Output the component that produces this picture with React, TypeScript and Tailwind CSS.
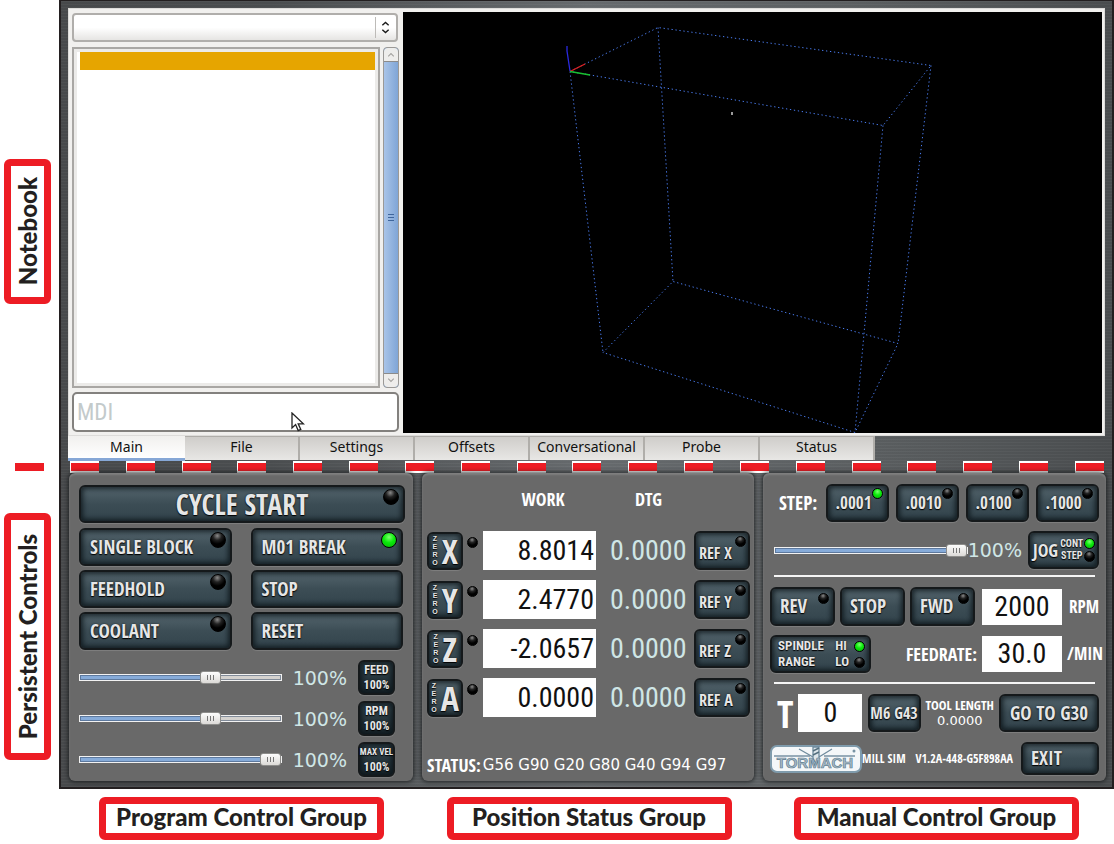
import { useState } from "react"
import type { CSSProperties, ReactNode } from "react"
import clsx from "clsx"

const metal =
    "border-x-2 border-[#231f20] bg-[repeating-linear-gradient(0deg,rgba(255,255,255,0.02)_0px,rgba(255,255,255,0.02)_1px,rgba(0,0,0,0.04)_1px,rgba(0,0,0,0.04)_3px),linear-gradient(90deg,#4a4c4e_0%,#4d5052_20%,#6a6e71_50%,#5f6365_75%,#4c4f51_100%)]"

const condensed = "font-['Open_Sans_Condensed','Roboto_Condensed',sans-serif]"
const digits = "font-['Roboto_Condensed','Liberation_Sans',sans-serif]"
const embossed = "text-[#e6e6e6] [text-shadow:0_1px_1px_#000,0_0_2px_rgba(0,0,0,0.6)]"

const axes = [
    { name: "X", work: "8.8014", dtg: "0.0000" },
    { name: "Y", work: "2.4770", dtg: "0.0000" },
    { name: "Z", work: "-2.0657", dtg: "0.0000" },
    { name: "A", work: "0.0000", dtg: "0.0000" },
]

const tabs = ["Main", "File", "Settings", "Offsets", "Conversational", "Probe", "Status"]

const steps = [".0001", ".0010", ".0100", ".1000"]

function Led({ on = false, small = false, className }: { on?: boolean; small?: boolean; className?: string }) {
    return (
        <span
            className={clsx(
                "block shrink-0 rounded-full border border-black",
                small ? "size-[11px]" : "size-4",
                on
                    ? "bg-[radial-gradient(circle_at_50%_30%,#7dff6e_0%,#0bea0b_45%,#05b505_100%)]"
                    : "bg-[radial-gradient(circle_at_45%_20%,#8a8a8a_0%,#222_32%,#000_60%)]",
                className
            )}
        />
    )
}

function PanelButton({
    children,
    className,
    label,
    dark = false,
}: {
    children?: ReactNode
    className?: string
    label?: string
    dark?: boolean
}) {
    return (
        <button
            type="button"
            aria-label={label}
            className={clsx(
                "relative flex shrink-0 items-center rounded-md border-2 border-[#15191b] bg-linear-to-b font-bold whitespace-nowrap shadow-[inset_0_0_5px_2px_rgba(8,16,20,0.75),0_1px_1px_rgba(255,255,255,0.15)]",
                dark ? "from-[#33444c] to-[#1c292f]" : "from-[#54656d] via-[#3c4d55] to-[#33444c]",
                condensed,
                embossed,
                className
            )}
        >
            {children}
        </button>
    )
}

function Slider({ label, max, className }: { label: string; max: number; className?: string }) {
    const [value, setValue] = useState(100)
    const fill = { "--fill": `${(value / max) * 100}%` } as CSSProperties

    return (
        <input
            type="range"
            aria-label={label}
            min={0}
            max={max}
            value={value}
            onChange={(e) => setValue(Number(e.target.value))}
            style={fill}
            className={clsx(
                "h-[13px] min-w-0 appearance-none bg-transparent",
                "[&::-webkit-slider-runnable-track]:h-[7px] [&::-webkit-slider-runnable-track]:border [&::-webkit-slider-runnable-track]:border-[#f2f2f2] [&::-webkit-slider-runnable-track]:bg-[linear-gradient(90deg,#86abd9_var(--fill),#d4d2cf_var(--fill))] [&::-webkit-slider-runnable-track]:shadow-[inset_0_0_0_1px_rgba(60,80,110,0.55)]",
                "[&::-webkit-slider-thumb]:mt-[-4px] [&::-webkit-slider-thumb]:h-[13px] [&::-webkit-slider-thumb]:w-[21px] [&::-webkit-slider-thumb]:appearance-none [&::-webkit-slider-thumb]:rounded-[3px] [&::-webkit-slider-thumb]:border [&::-webkit-slider-thumb]:border-[#8d8d8b]",
                "[&::-webkit-slider-thumb]:bg-[linear-gradient(90deg,#777_1px,transparent_1px,transparent_3px,#777_3px,#777_4px,transparent_4px,transparent_6px,#777_6px,#777_7px),linear-gradient(#fdfdfd,#dcdad7)] [&::-webkit-slider-thumb]:bg-[length:7px_5px,100%_100%] [&::-webkit-slider-thumb]:bg-center [&::-webkit-slider-thumb]:bg-no-repeat",
                className
            )}
        />
    )
}

function Percent() {
    return <span className="font-['DejaVu_Sans',sans-serif] text-[19px] leading-6 text-[#cfe6e6]">100%</span>
}

function Panel({ children, className }: { children: ReactNode; className?: string }) {
    return (
        <section
            className={clsx(
                "flex min-w-0 flex-col rounded-md bg-[#696969] shadow-[0_0_4px_1px_rgba(20,22,24,0.8),inset_0_2px_2px_rgba(255,255,255,0.15)]",
                className
            )}
        >
            {children}
        </section>
    )
}

function SideLabel({ children, className }: { children: ReactNode; className?: string }) {
    return (
        <div
            className={clsx(
                "ml-1 flex w-[47px] items-center justify-center rounded-md border-7 border-[#ed1c24] bg-white",
                className
            )}
        >
            <span className="rotate-180 font-['Lato',sans-serif] text-2xl leading-6 font-black whitespace-nowrap text-[#231f20] [writing-mode:vertical-rl]">
                {children}
            </span>
        </div>
    )
}

function BottomLabel({ children }: { children: ReactNode }) {
    return (
        <div className="flex h-[43px] w-[285px] items-center justify-center rounded-md border-7 border-[#ed1c24] bg-white pb-1 font-['Lato',sans-serif] text-2xl leading-7 font-black whitespace-nowrap text-[#231f20]">
            {children}
        </div>
    )
}

function ProgramList() {
    return (
        <div className="flex w-[334px] shrink-0 flex-col pt-px pr-1 pb-px pl-[3px]">
            <div className="relative w-[326px]">
                <select
                    aria-label="Loaded program"
                    className="block h-[29px] w-full appearance-none rounded-sm border-2 border-[#b0aeab] bg-linear-to-b from-white from-50% to-[#e6e5e3]"
                >
                    <option value=""></option>
                </select>
                <span className="pointer-events-none absolute top-1 right-[22px] h-[21px] w-px bg-[#bdbbb8]" />
                <svg className="pointer-events-none absolute top-2 right-[8px] h-[13px] w-[9px]" viewBox="0 0 10 14" fill="none" stroke="#1a1a1a" strokeWidth="1.600">
                    <path d="M1.500 4.500 5 1.500 8.500 4.500M1.500 9.500 5 12.500 8.500 9.500" />
                </svg>
            </div>
            <div className="mt-[5px] flex min-h-0 flex-1 gap-[3px]">
                <div className="flex-1 border-2 border-[#a9a7a4] bg-[#ecebe9] p-[3px]">
                    <div className="h-full bg-white pl-[3px]">
                        <div className="h-[18px] bg-[#e6a500]" />
                    </div>
                </div>
                <div className="flex w-4 flex-col rounded-sm border border-[#9b9996] bg-[#86abd9]">
                    <svg className="h-[14px] w-full rounded-t-sm border-b border-[#8b8b8b] bg-[#eeedeb]" viewBox="0 0 14 14" fill="none" stroke="#a5a3a0" strokeWidth="1.200">
                        <path d="M4 9l3-3 3 3" />
                    </svg>
                    <div className="flex flex-1 flex-col items-center justify-center gap-[2px] bg-linear-to-r from-[#a9c4e8] to-[#7fa5d6]">
                        <span className="h-px w-[6px] bg-[#3f669c]" />
                        <span className="h-px w-[6px] bg-[#3f669c]" />
                        <span className="h-px w-[6px] bg-[#3f669c]" />
                    </div>
                    <svg className="h-[14px] w-full rounded-b-sm border-t border-[#8b8b8b] bg-[#eeedeb]" viewBox="0 0 14 14" fill="none" stroke="#a5a3a0" strokeWidth="1.200">
                        <path d="M4 5l3 3 3-3" />
                    </svg>
                </div>
            </div>
            <div className="relative mt-1">
                <input
                    type="text"
                    aria-label="MDI"
                    placeholder="MDI"
                    className={clsx(
                        "block h-10 w-full rounded-[5px] border-2 border-[#83817e] bg-white px-[3px] text-[23px] placeholder:text-[#c3cacb]",
                        digits
                    )}
                />
                <svg className="absolute top-5 left-[219px] h-[20px] w-[14px]" viewBox="0 0 14 20" fill="#fff" stroke="#222" strokeWidth="1.300">
                    <path d="M1 1v15l3.600-3.400L7.200 18.600l2.600-1.200-2.600-5.600h5.200z" />
                </svg>
            </div>
        </div>
    )
}

function ToolPath() {
    return (
        <div className="h-[421px] min-w-0 flex-1 bg-black">
            <svg className="h-full w-full" viewBox="0 0 699 421" fill="none">
                <g stroke="#4a7cf0" strokeWidth="1" strokeDasharray="1.300 2.700">
                    <path d="M167 59.500 255 15.500 528 53.500 480 113.500z" />
                    <path d="M200 340.500 270 269.500 495 331.500 452 420.500z" />
                    <path d="M167 59.500 200 340.500M255 15.500 270 269.500M528 53.500 495 331.500M480 113.500 452 420.500" />
                </g>
                <path d="M164 34v5l3 20" stroke="#2a2ae0" strokeWidth="1.300" />
                <path d="M167 59.500l15-7.500" stroke="#e02020" strokeWidth="1.300" />
                <path d="M167 59.500l20 3.500" stroke="#18c030" strokeWidth="1.500" />
                <path d="M329 100v3" stroke="#999" strokeWidth="2" />
            </svg>
        </div>
    )
}

function Tabs() {
    const [active, setActive] = useState("Main")

    return (
        <div role="tablist" className="flex h-[25px] items-start">
            {tabs.map((tab, i) => (
                <button
                    key={tab}
                    type="button"
                    role="tab"
                    aria-selected={tab === active}
                    onClick={() => setActive(tab)}
                    className={clsx(
                        "font-['Noto_Sans',sans-serif] text-sm leading-5 text-[#111]",
                        i === 0 ? "w-[117px]" : "w-[115px]",
                        tab === active
                            ? "h-[25px] border-b-3 border-[#86a7d6] bg-linear-to-b from-[#f1f0ee] to-white"
                            : "h-6 border-t border-r-2 border-[#b0aeaa] bg-linear-to-b from-[#cfcdca] to-[#e8e7e5] pb-[3px]"
                    )}
                >
                    {tab}
                </button>
            ))}
        </div>
    )
}

function Dash() {
    return (
        <span className="block w-[29px] bg-white py-[2px] pl-px">
            <span className="block h-2 bg-[#ed1c24]" />
        </span>
    )
}

function ProgramControl() {
    const overrides = [
        { label: "FEED", max: 150 },
        { label: "RPM", max: 150 },
        { label: "MAX VEL", max: 100 },
    ]

    return (
        <Panel className="pt-3 pr-2 pb-1 pl-[10px]">
            <PanelButton className="h-[38px] w-full justify-center text-[28px]">
                CYCLE START
                <Led className="absolute top-[2px] right-1" />
            </PanelButton>
            <div className="mt-[5px] grid grid-cols-2 gap-x-[19px] gap-y-1 pr-[2px] text-[19px]">
                <PanelButton className="h-[38px] pl-[9px]">
                    SINGLE BLOCK
                    <Led className="absolute top-[2px] right-1" />
                </PanelButton>
                <PanelButton className="h-[38px] pl-[9px]">
                    M01 BREAK
                    <Led on className="absolute top-[2px] right-1" />
                </PanelButton>
                <PanelButton className="h-[38px] pl-[9px]">
                    FEEDHOLD
                    <Led className="absolute top-[2px] right-1" />
                </PanelButton>
                <PanelButton className="h-[38px] pl-[9px]">STOP</PanelButton>
                <PanelButton className="h-[38px] pl-[9px]">
                    COOLANT
                    <Led className="absolute top-[2px] right-1" />
                </PanelButton>
                <PanelButton className="h-[38px] pl-[9px]">RESET</PanelButton>
            </div>
            <div className="mt-[10px] flex flex-col gap-[6px]">
                {overrides.map(({ label, max }) => (
                    <div key={label} className="flex items-center gap-[11px]">
                        <Slider label={label} max={max} className="flex-1" />
                        <Percent />
                        <PanelButton
                            dark
                            label={`${label} 100%`}
                            className="mr-[10px] h-[35px] w-[37px] flex-col justify-center"
                        >
                            <span className={clsx("leading-[15px]", digits, label === "MAX VEL" ? "text-[9px]" : "text-xs")}>{label}</span>
                            <span className={clsx("text-xs leading-[15px]", digits)}>100%</span>
                        </PanelButton>
                    </div>
                ))}
            </div>
        </Panel>
    )
}

function PositionStatus() {
    return (
        <Panel className="pr-1 pb-1 pl-[5px]">
            <div className={clsx("flex pt-3 text-lg leading-7 font-bold text-white", condensed)}>
                <span className="ml-[60px] w-[112px] text-center">WORK</span>
                <span className="ml-[13px] w-[73px] text-center">DTG</span>
            </div>
            <div className="mt-[18px] flex flex-col gap-[10px]">
                {axes.map((axis) => (
                    <div key={axis.name} className="flex items-center">
                        <PanelButton label={`Zero ${axis.name}`} className="h-[38px] w-9 justify-center gap-1">
                            <span className="flex flex-col items-center font-['Liberation_Sans',sans-serif] text-[7px] leading-[8px]">
                                <span>Z</span>
                                <span>E</span>
                                <span>R</span>
                                <span>O</span>
                            </span>
                            <span className="text-[34px] leading-8">{axis.name}</span>
                        </PanelButton>
                        <Led small className="mr-[5px] mb-4 ml-1" />
                        <input
                            type="text"
                            aria-label={`${axis.name} work`}
                            defaultValue={axis.work}
                            className={clsx("h-[39px] w-[113px] min-w-0 bg-white px-[2px] text-right text-[28px] text-[#111]", digits)}
                        />
                        <span className={clsx("ml-[14px] w-[74px] text-[28px] leading-8 text-[#cfe6e6]", digits)}>{axis.dtg}</span>
                        <PanelButton className="ml-auto h-[39px] w-[56px] pt-1 pl-[3px] text-base">
                            REF {axis.name}
                            <Led small className="absolute top-[3px] right-[2px]" />
                        </PanelButton>
                    </div>
                ))}
            </div>
            <div className="mt-auto flex items-center gap-[2px] whitespace-nowrap text-white">
                <span className={clsx("text-lg leading-6 font-bold", condensed)}>STATUS:</span>
                <span className="font-['DejaVu_Sans',sans-serif] text-[15px] leading-5">G56 G90 G20 G80 G40 G94 G97</span>
            </div>
        </Panel>
    )
}

function Logo() {
    return (
        <svg className="h-[28px] w-[92px] shrink-0" viewBox="0 0 92 28" role="img" aria-label="Tormach">
            <rect x="1" y="1" width="90" height="26" rx="6" fill="#f4f7f9" stroke="#7f9bac" strokeWidth="2" />
            <path d="M4 11h36M54 11h31" stroke="#7893a4" strokeWidth="1.500" />
            <path d="M29 4l14 8M62 4l-13 8M43 2v11l3 6 3-6V2z" stroke="#6f8b9d" strokeWidth="1.300" fill="#dfe7ec" />
            <path d="M43 6l6-3M43 10l6-3" stroke="#55707f" strokeWidth="1.500" />
            <circle cx="84" cy="6" r="1.500" fill="#7893a4" />
            <text x="45" y="23" textAnchor="middle" fill="#a9bcc8" stroke="#5f7d90" strokeWidth="0.700" className="font-['Liberation_Sans',sans-serif] text-[15px] font-bold">
                TORMACH
            </text>
        </svg>
    )
}

function ManualControl() {
    const field = clsx("h-9 w-[80px] min-w-0 bg-white text-center text-[28px] text-[#111]", digits)
    const caption = clsx("font-bold whitespace-nowrap text-white", condensed)

    return (
        <Panel className="pt-[11px] pr-[7px] pb-[6px] pl-[7px]">
            <div className="flex items-center gap-[7px]">
                <span className={clsx("mr-auto ml-[9px] text-[19px]", caption)}>STEP:</span>
                {steps.map((step, i) => (
                    <PanelButton key={step} className="h-[38px] w-[63px] justify-center pr-2 text-[17px]">
                        {step}
                        <Led small on={i === 0} className="absolute top-[2px] right-1" />
                    </PanelButton>
                ))}
            </div>
            <div className="mt-[9px] flex items-center">
                <Slider label="Jog speed" max={100} className="ml-1 flex-1" />
                <Percent />
                <PanelButton label="Jog mode" className="ml-[6px] h-[38px] w-[71px] gap-[2px] pl-[3px]">
                    <span className="text-lg">JOG</span>
                    <span className={clsx("flex flex-col text-[10px] leading-3", digits)}>
                        <span>CONT</span>
                        <span>STEP</span>
                    </span>
                    <span className="absolute top-[5px] right-[2px] flex flex-col gap-[2px]">
                        <Led small on />
                        <Led small />
                    </span>
                </PanelButton>
            </div>
            <hr className="mx-1 mt-[6px] border-t-2 border-[#f5f5f5]" />
            <div className="mt-[10px] flex items-center gap-[5px]">
                <PanelButton className="h-[39px] w-[65px] pl-2 text-[19px]">
                    REV
                    <Led small className="absolute top-1 right-1" />
                </PanelButton>
                <PanelButton className="h-[39px] w-[65px] pl-2 text-[19px]">STOP</PanelButton>
                <PanelButton className="h-[39px] w-[65px] pl-2 text-[19px]">
                    FWD
                    <Led small className="absolute top-1 right-1" />
                </PanelButton>
                <input id="rpm" type="text" defaultValue="2000" className={clsx("ml-auto", field)} />
                <label htmlFor="rpm" className={clsx("w-[32px] text-right text-[17px]", caption)}>
                    RPM
                </label>
            </div>
            <div className="mt-[9px] flex items-center gap-[5px]">
                <PanelButton label="Spindle range" className="h-[38px] w-[101px] justify-between pr-5 pl-[6px]">
                    <span className={clsx("flex flex-col text-left text-[13px] leading-4", digits)}>
                        <span>SPINDLE</span>
                        <span>RANGE</span>
                    </span>
                    <span className={clsx("flex flex-col text-left text-[13px] leading-4", digits)}>
                        <span>HI</span>
                        <span>LO</span>
                    </span>
                    <span className="absolute top-1 right-1 flex flex-col gap-[5px]">
                        <Led small on />
                        <Led small />
                    </span>
                </PanelButton>
                <label htmlFor="feedrate" className={clsx("ml-auto text-lg", caption)}>
                    FEEDRATE:
                </label>
                <input id="feedrate" type="text" defaultValue="30.0" className={field} />
                <span className={clsx("w-[32px] text-right text-[17px]", caption)}>/MIN</span>
            </div>
            <hr className="mx-1 mt-[9px] border-t-2 border-[#f5f5f5]" />
            <div className="mt-[10px] flex items-center justify-between">
                <label htmlFor="tool" className={clsx("ml-[7px] text-[38px] leading-[38px]", caption)}>
                    T
                </label>
                <input
                    id="tool"
                    type="text"
                    defaultValue="0"
                    className={clsx("h-[38px] w-16 min-w-0 bg-white text-center text-[28px] text-[#111]", digits)}
                />
                <PanelButton className="h-[38px] w-[53px] justify-center text-base">M6 G43</PanelButton>
                <div className="flex flex-col items-center text-white">
                    <span className={clsx("text-[13px] leading-4", caption)}>TOOL LENGTH</span>
                    <span className="font-['DejaVu_Sans',sans-serif] text-[13px] leading-4">0.0000</span>
                </div>
                <PanelButton className="h-[38px] w-[100px] justify-center text-[19px]">GO TO G30</PanelButton>
            </div>
            <div className="mt-[10px] flex items-center">
                <Logo />
                <span className={clsx("text-xs", caption)}>MILL SIM</span>
                <span className={clsx("ml-auto text-xs", caption)}>V1.2A-448-G5F898AA</span>
                <PanelButton className="ml-2 h-[33px] w-[78px] pl-2 text-[19px]">EXIT</PanelButton>
            </div>
        </Panel>
    )
}

export default function App() {
    return (
        <main className="bg-white">
            <div className="grid grid-cols-[59px_1fr]">
                <div className="pt-[159px]">
                    <SideLabel className="h-[145px]">Notebook</SideLabel>
                </div>
                <div className={clsx("border-t px-[7px] pt-[7px]", metal)}>
                    <div className="flex border border-[#dddcda] bg-[#f1f0ee] pt-[3px] pr-[2px] pb-[2px]">
                        <ProgramList />
                        <ToolPath />
                    </div>
                    <Tabs />
                </div>

                <div className="flex items-center pl-[15px]">
                    <span className="block h-2 w-[29px] bg-[#ed1c24]" />
                </div>
                <div className={clsx("flex justify-between pr-2 pl-[9px]", metal)}>
                    {[...Array(19)].map((_, i) => (
                        <Dash key={i} />
                    ))}
                </div>

                <div className="pt-10">
                    <SideLabel className="h-[247px]">Persistent Controls</SideLabel>
                </div>
                <div className={clsx("grid grid-cols-[344fr_332fr_343fr] gap-[9px] border-b-2 pr-[6px] pb-[6px] pl-2", metal)}>
                    <ProgramControl />
                    <PositionStatus />
                    <ManualControl />
                </div>
            </div>
            <div className="flex justify-between pt-2 pr-[35px] pl-[99px]">
                <BottomLabel>Program Control Group</BottomLabel>
                <BottomLabel>Position Status Group</BottomLabel>
                <BottomLabel>Manual Control Group</BottomLabel>
            </div>
        </main>
    )
}
